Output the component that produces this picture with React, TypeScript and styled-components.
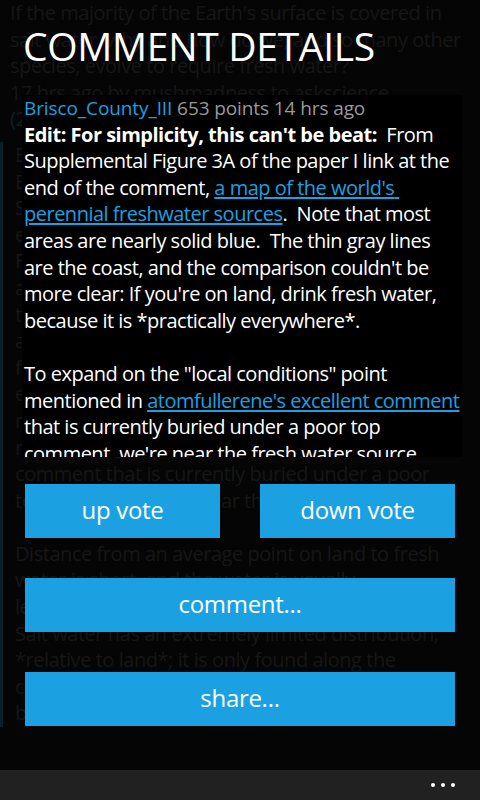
import React from "react";
import styled, { createGlobalStyle } from "styled-components";

const GlobalStyle = createGlobalStyle`
  html, body {
    margin: 0;
    padding: 0;
    background: #000;
  }
  body {
    font-family: "Open Sans", "Noto Sans", "DejaVu Sans", sans-serif;
    -webkit-font-smoothing: antialiased;
  }
`;

const ACCENT = "#1ba1e2";

const Screen = styled.div`
  width: 480px;
  height: 800px;
  display: flex;
  flex-direction: column;
  background: #050505;
  overflow: hidden;
`;

const Stage = styled.div`
  position: relative;
  flex: 1;
  overflow: hidden;
`;

// ---- the post page that sits dimmed behind the popup ----

const BehindPage = styled.div`
  color: #161616;
  font-size: 20px;
  line-height: 26.6px;
  letter-spacing: -0.45px;
`;

const PostTitle = styled.div`
  padding: 0 10px;
  white-space: pre-line;
`;

const PostMeta = styled.div<{ $link?: boolean }>`
  padding: 0 10px;
  white-space: nowrap;
  color: ${({ $link }) => ($link ? "#0a1f29" : "#161616")};
`;

const CommentBlock = styled.div`
  margin-top: 9px;
  border-left: 3px solid #08202a;
  padding-left: 12px;
  white-space: pre;
`;

const BlankLine = styled.div`
  height: 26.6px;
`;

// ---- popup ----

const Overlay = styled.div`
  position: absolute;
  inset: 0;
  display: flex;
  flex-direction: column;
`;

const TitleBar = styled.div`
  height: 95px;
  box-sizing: border-box;
  padding: 23px 0 0 23px;
  color: #fff;
  font-size: 39px;
  line-height: 46px;
  font-weight: 400;
  letter-spacing: -0.3px;
`;

const Panel = styled.div`
  margin-left: 22px;
  width: 440px;
  height: 362px;
  padding-left: 2px;
  box-sizing: border-box;
  background: #000;
  overflow: hidden;
  color: #fff;
`;

const Byline = styled.div`
  font-size: 19px;
  line-height: 26.6px;
  letter-spacing: -0.1px;
  white-space: nowrap;
  color: #9a9a9a;
`;

const Author = styled.span`
  color: ${ACCENT};
`;

const Body = styled.p`
  margin: 0 0 26.6px;
  font-size: 20px;
  line-height: 26.6px;
  letter-spacing: -0.5px;
  white-space: pre-wrap;
`;

const Strong = styled.b`
  font-weight: 700;
`;

const Link = styled.a`
  color: ${ACCENT};
  text-decoration: underline;
  text-underline-offset: 2px;
`;

const Actions = styled.div`
  margin: 27px 0 0 25px;
  width: 430px;
  display: flex;
  flex-direction: column;
  gap: 40px;
`;

const ActionRow = styled.div`
  display: flex;
  gap: 40px;

  & > button {
    flex: 1;
  }
`;

const ActionButton = styled.button`
  flex: none;
  height: 54px;
  border: none;
  padding: 0 0 3px;
  background: ${ACCENT};
  color: #fff;
  font-family: inherit;
  font-size: 24px;
  letter-spacing: -0.3px;
  cursor: pointer;
`;

// ---- application bar ----

const AppBar = styled.div`
  height: 30px;
  flex-shrink: 0;
  background: #212121;
  display: flex;
  justify-content: flex-end;
  align-items: center;
  gap: 6px;
  padding-right: 25px;
`;

const Dot = styled.span`
  width: 4px;
  height: 4px;
  border-radius: 50%;
  background: #fff;
`;

const behindComment = [
  "Edit: For simplicity, this can't be beat:",
  "Eupplemental Figure 3A of the paper I link",
  "Supplemental Figure [a map of the world's",
  "end of the comment, freshwater sources]",
  "From the paper.  Note that most areas are",
  "are nearly solid blue.  The thin gray lines",
  "the coast, and the comparison couldn't be",
  "and more clear: If you're on land, drink",
  "fresh water, because it is *practically",
  "everywhere*.  To expand on the point",
  "mentioned in [atomfullerene's",
  "r[comment](http://redd.it) excellent",
  "comment that is currently buried under a poor",
  "top comment, we're near the fresh water",
  null,
  "Distance from an average point on land to fresh",
  "water is short, and the water is usually",
  "less than a day's walk from almost anywhere.",
  "Salt water has an extremely limited distribution,",
  "*relative to land*; it is only found along the",
  "coasts, and most of the land is far from them,",
  "because continents are large.",
];

export default function App() {
  return (
    <>
      <GlobalStyle />
      <Screen>
        <Stage>
          <BehindPage>
            <PostTitle>
              {"If the majority of the Earth's surface is covered in\nsalt water, why and how do we, and so many other\nspecies, evolve to require fresh water?"}
            </PostTitle>
            <PostMeta>17 hrs ago by mushmadness to askscience</PostMeta>
            <PostMeta $link>(2041 comments)</PostMeta>
            <CommentBlock>
              {behindComment.map((line, i) =>
                line === null ? (
                  <BlankLine key={i} />
                ) : (
                  <div key={i}>{line || " "}</div>
                )
              )}
            </CommentBlock>
          </BehindPage>

          <Overlay>
            <TitleBar>COMMENT DETAILS</TitleBar>
            <Panel>
              <Byline>
                <Author>Brisco_County_III</Author> 653 points 14 hrs ago
              </Byline>
              <Body>
                <Strong>Edit: For simplicity, this can't be beat:</Strong>
                {"  From Supplemental Figure 3A of the paper I link at the end of the comment, "}
                <Link>a map of the world's perennial freshwater sources</Link>
                {".  Note that most areas are nearly solid blue.  The thin gray lines are the coast, and the comparison couldn't be more clear: If you're on land, drink fresh water, because it is *practically everywhere*."}
              </Body>
              <Body>
                {'To expand on the "local conditions" point mentioned in '}
                <Link>atomfullerene's excellent comment</Link>
                {" that is currently buried under a poor top comment, we're near the fresh water source most of the time."}
              </Body>
            </Panel>
            <Actions>
              <ActionRow>
                <ActionButton>up vote</ActionButton>
                <ActionButton>down vote</ActionButton>
              </ActionRow>
              <ActionButton>comment...</ActionButton>
              <ActionButton>share...</ActionButton>
            </Actions>
          </Overlay>
        </Stage>
        <AppBar>
          <Dot />
          <Dot />
          <Dot />
        </AppBar>
      </Screen>
    </>
  );
}
